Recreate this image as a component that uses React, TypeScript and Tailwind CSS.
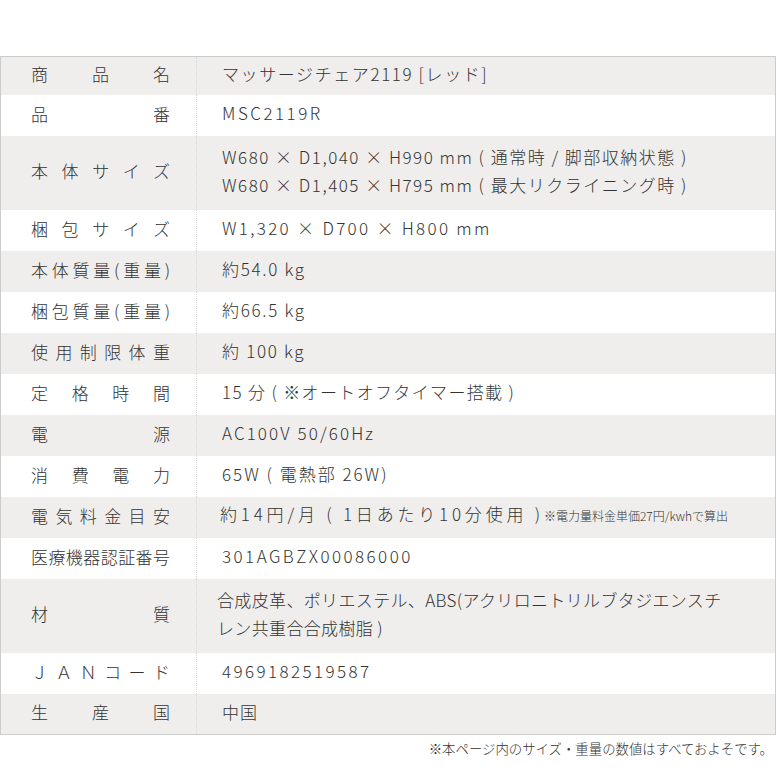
import React from "react";

type Row = { label: string; value: React.ReactNode; h: string; bg: boolean; t: string };

const rows: Row[] = [
  { label: "商品名", value: "マッサージチェア2119 [レッド]", h: "h-[38px]", bg: true, t: "tracking-[1.6px]" },
  { label: "品番", value: "MSC2119R", h: "h-[41px]", bg: false, t: "tracking-[2.5px]" },
  {
    label: "本体サイズ",
    value: (
      <>
        W680 × D1,040 × H990 mm ( 通常時 / 脚部収納状態 )
        <br />
        W680 × D1,405 × H795 mm ( 最大リクライニング時 )
      </>
    ),
    h: "h-[74px]",
    bg: true,
    t: "tracking-[1.5px]",
  },
  { label: "梱包サイズ", value: "W1,320 × D700 × H800 mm", h: "h-[41px]", bg: false, t: "tracking-[2.3px]" },
  { label: "本体質量(重量)", value: "約54.0 kg", h: "h-[41px]", bg: true, t: "tracking-[1.7px]" },
  { label: "梱包質量(重量)", value: "約66.5 kg", h: "h-[41px]", bg: false, t: "tracking-[1.7px]" },
  { label: "使用制限体重", value: "約 100 kg", h: "h-[41px]", bg: true, t: "tracking-[1.7px]" },
  { label: "定格時間", value: "15 分 ( ※オートオフタイマー搭載 )", h: "h-[41px]", bg: false, t: "tracking-[1.35px]" },
  { label: "電源", value: "AC100V 50/60Hz", h: "h-[41px]", bg: true, t: "tracking-[2.1px]" },
  { label: "消費電力", value: "65W ( 電熱部 26W)", h: "h-[41px]", bg: false, t: "tracking-[2px]" },
  {
    label: "電気料金目安",
    value: (
      <>
        約14円/月 ( 1日あたり10分使用 )
        <span className="text-[12px] tracking-normal">※電力量料金単価27円/kwhで算出</span>
      </>
    ),
    h: "h-[41px]",
    bg: true,
    t: "tracking-[3.8px] -ml-[2px]",
  },
  { label: "医療機器認証番号", value: "301AGBZX00086000", h: "h-[41px]", bg: false, t: "tracking-[2.45px]" },
  {
    label: "材質",
    value: (
      <>
        合成皮革、ポリエステル、ABS(アクリロニトリルブタジエンスチ
        <br />
        レン共重合合成樹脂 )
      </>
    ),
    h: "h-[74px]",
    bg: true,
    t: "tracking-[0.35px] -ml-[5px]",
  },
  { label: "ＪＡＮコード", value: "4969182519587", h: "h-[41px]", bg: false, t: "tracking-[2.4px]" },
  { label: "生産国", value: "中国", h: "h-[40px]", bg: true, t: "tracking-[1px]" },
];

export default function App() {
  return (
    <div
      className="w-[776px] h-[780px] bg-white text-[#333333] font-light"
      style={{ fontFamily: '"Noto Sans CJK JP", "Noto Sans", sans-serif' }}
    >
      <div className="pt-[56px]">
        <div className="border border-[#cccccc]">
          {rows.map((r, i) => (
            <div
              key={i}
              className={`flex ${r.h} ${r.bg ? "bg-[#f0eeec]" : "bg-white"}`}
            >
              <div className="w-[196px] shrink-0 flex items-center pb-[5px] pl-[30px] pr-[26px] border-r border-dotted border-[#d8d8d8]">
                <div className="w-full text-[17px] leading-none text-justify [text-align-last:justify]">
                  {r.label}
                </div>
              </div>
              <div className="flex-1 flex items-center pb-[5px] pl-[25px] text-[17px] leading-[28px]">
                <div className={`whitespace-nowrap ${r.t}`}>{r.value}</div>
              </div>
            </div>
          ))}
        </div>
      </div>
      <div className="text-right text-[13.4px] mt-[3px] pr-[3px]">
        ※本ページ内のサイズ・重量の数値はすべておよそです。
      </div>
    </div>
  );
}
